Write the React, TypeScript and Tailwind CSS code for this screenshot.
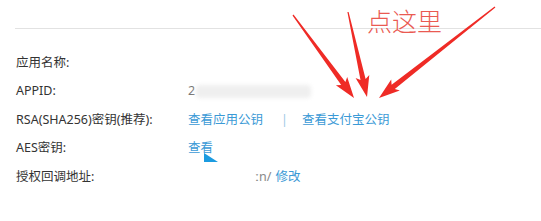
import React from 'react';

type Pt = [number, number];

// tapered red annotation arrow, tail -> tip
function arrowPoints(tail: Pt, tip: Pt) {
  const dx = tip[0] - tail[0];
  const dy = tip[1] - tail[1];
  const len = Math.hypot(dx, dy);
  const ux = dx / len, uy = dy / len;
  const nx = -uy, ny = ux;
  const headLen = 18;
  const bx = tip[0] - ux * headLen, by = tip[1] - uy * headLen;
  const p = (x: number, y: number, k: number, back = 0): string =>
    `${(x + nx * k - ux * back).toFixed(1)},${(y + ny * k - uy * back).toFixed(1)}`;
  return [
    p(tail[0], tail[1], 0.6),
    p(bx, by, 2.6),
    p(bx, by, 7, 3),
    `${tip[0]},${tip[1]}`,
    p(bx, by, -7, 3),
    p(bx, by, -2.6),
    p(tail[0], tail[1], -0.6),
  ].join(' ');
}

const arrows: { tail: Pt; tip: Pt }[] = [
  { tail: [293, 15], tip: [354, 98] },
  { tail: [348, 12], tip: [367, 97] },
  { tail: [495, 7], tip: [379, 98] },
];

const rows = [
  { label: '应用名称:', value: null as React.ReactNode },
  {
    label: 'APPID:',
    value: (
      <div className="flex items-center">
        <span className="text-[#777]">2</span>
        <div className="ml-[1px] h-[13px] w-[115px] rounded-sm bg-[#efefef] blur-[2px]" />
      </div>
    ),
  },
  {
    label: 'RSA(SHA256)密钥(推荐):',
    value: (
      <div className="flex items-center text-[#3b9ad6]">
        <span>查看应用公钥</span>
        <span className="ml-[18px] text-[#9cc8e6]">|</span>
        <span className="ml-[14px]">查看支付宝公钥</span>
      </div>
    ),
  },
  { label: 'AES密钥:', value: <span className="text-[#3b9ad6]">查看</span> },
  {
    label: '授权回调地址:',
    value: (
      <div className="flex items-center pl-[67px]">
        <span className="text-[#888]">ːn/</span>
        <span className="ml-[4px] text-[#3b9ad6]">修改</span>
      </div>
    ),
  },
];

export default function App() {
  return (
    <div
      className="relative h-[221px] w-[541px] overflow-hidden bg-white"
      style={{ fontFamily: '"Noto Sans", "Noto Sans CJK SC", sans-serif' }}
    >
      <div className="pt-[28px] pl-[15px]">
        <div className="border-t border-[#e2e2e2]" />
      </div>

      <div className="mt-[20px] flex flex-col pl-[16px] text-[12.5px] text-[#333]">
        {rows.map(r => (
          <div key={r.label} className="flex h-[28.5px] items-center">
            <div className="w-[172px] shrink-0">{r.label}</div>
            <div>{r.value}</div>
          </div>
        ))}
      </div>

      {/* annotation text */}
      <div
        className="absolute left-[367px] top-[8px] text-[25px] font-light leading-none text-[#ea5a52]"
        style={{ fontFamily: '"Noto Sans CJK SC", sans-serif' }}
      >
        点这里
      </div>

      {/* arrows + mouse cursor overlay */}
      <svg className="pointer-events-none absolute left-0 top-0" width="541" height="221">
        {arrows.map((a, i) => (
          <polygon key={i} points={arrowPoints(a.tail, a.tip)} fill="#ef2b26" />
        ))}
        <polygon points="204,153 204,162 218,162" fill="#1b9be0" />
      </svg>
    </div>
  );
}
